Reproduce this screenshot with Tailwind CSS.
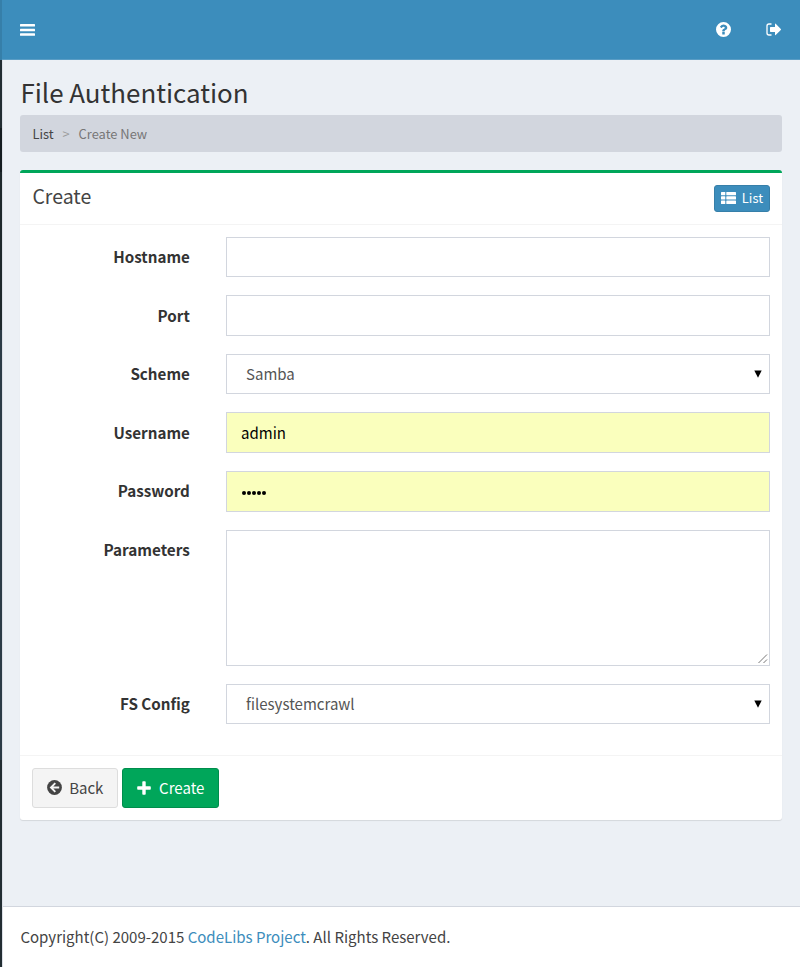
<!DOCTYPE html>
<html lang="en">
<head>
<meta charset="utf-8">
<title>File Authentication</title>
<script src="https://cdn.jsdelivr.net/npm/@tailwindcss/browser@4"></script>
</head>
<body class="font-['Noto_Sans_CJK_SC','Noto_Sans_CJK_JP','Open_Sans',sans-serif] text-[15.02px] leading-[20px] text-[#444] bg-[#ecf0f5]">
<div class="flex h-[967px] w-[800px] overflow-hidden">
  <aside class="flex w-[2px] shrink-0 flex-col">
    <div class="h-[60px] bg-[#367fa9]"></div>
    <div class="h-[68px] bg-[#222d32]"></div>
    <div class="h-[44px] bg-[#141c20]"></div>
    <div class="h-[158px] bg-[#1e282c]"></div>
    <div class="h-[430px] bg-[#2c3b46]"></div>
    <div class="grow bg-[#222d32]"></div>
  </aside>
  <div class="flex min-w-0 grow flex-col border-l border-[#d2d6de]/60">
    <header class="-ml-px flex h-[60px] shrink-0 items-center justify-between border-b border-[#5a9dc5] bg-[#3c8dbc] pr-[19px] pl-[18px] text-white">
      <svg class="mt-px h-[13px] w-[15px]" viewBox="0 0 15 13" fill="currentColor"><rect y="0.1" width="15" height="2.5" rx=".5"/><rect y="4.7" width="15" height="2.5" rx=".5"/><rect y="9.300" width="15" height="2.5" rx=".5"/></svg>
      <div class="flex items-center gap-[35px]">
        <svg class="h-[15px] w-[15px]" viewBox="0 0 1536 1536"><path fill="currentColor" fill-rule="evenodd" d="M768 0a768 768 0 1 0 0 1536A768 768 0 0 0 768 0ZM896 1248v-192q0-14-9-23t-23-9H672q-14 0-23 9t-9 23v192q0 14 9 23t23 9h192q14 0 23-9t9-23Zm256-672q0-88-55.500-163T958 297t-170-41q-243 0-371 213-15 24 8 42l132 100q7 6 19 6 16 0 25-12 53-68 86-92 34-24 86-24 48 0 85.500 26t37.500 59q0 38-20 61t-68 45q-63 28-115.500 86.500T640 892v36q0 14 9 23t23 9h192q14 0 23-9t9-23q0-19 21.500-49.500T972 829q32-18 49-28.500t46-35 44.500-48 28-60.500 12.500-81Z"/></svg>
        <svg class="h-[13px] w-[15px]" viewBox="0 0 15 13" fill="currentColor"><path d="M5.500 1H3A2 2 0 0 0 1 3v7a2 2 0 0 0 2 2h2.500" fill="none" stroke="currentColor" stroke-width="1.300"/><path d="M4.600 4.100H9V1.100q0-.8.7-.3l5.100 5.200q.4.400 0 .9L9.700 12.100q-.7.500-.7-.3V8.900H4.600q-.6 0-.6-.6V4.700q0-.6.6-.6Z"/></svg>
      </div>
    </header>
    <main class="flex h-[846.400px] shrink-0 flex-col pr-[18px] pl-[17.400px]">
      <h1 class="mt-[15px] h-[40px] text-[25.900px] leading-[34px] text-[#333]">File Authentication</h1>
      <nav class="flex h-[37px] shrink-0 items-center rounded-[3px] bg-[#d2d6de] px-3 text-[12.900px]">
        <span class="text-[#444]">List</span><span class="ml-[9px] w-[16px] text-[#999] text-[12.900px]">&gt;</span><span class="text-[#777]">Create New</span>
      </nav>
      <section class="mt-[18px] flex h-[650px] shrink-0 flex-col rounded-[3px] border-t-[3px] border-[#00a65a] bg-white shadow-[0_1px_1px_rgba(0,0,0,0.1)]">
        <div class="flex h-[52px] shrink-0 items-start justify-between border-b border-[#f4f4f4] px-3 pt-[12px]">
          <h2 class="-mt-px text-[19.500px] leading-[23px]">Create</h2>
          <a class="flex h-[27px] w-[56px] items-center justify-between rounded-[3px] border border-[#367fa9] bg-[#3c8dbc] px-[6px] text-[12.900px] text-white">
            <svg class="-mt-[2px] h-[12px] w-[15px]" viewBox="0 0 15 12" fill="currentColor"><rect width="4.300" height="3.300" rx=".5"/><rect x="5.300" width="9.700" height="3.300" rx=".5"/><rect y="4.300" width="4.300" height="3.300" rx=".5"/><rect x="5.300" y="4.300" width="9.700" height="3.300" rx=".5"/><rect y="8.600" width="4.300" height="3.300" rx=".5"/><rect x="5.300" y="8.600" width="9.700" height="3.300" rx=".5"/></svg>
            <span class="-mt-px">List</span>
          </a>
        </div>
        <form class="flex h-[530px] shrink-0 flex-col gap-[18.100px] px-3 pt-[11.700px]">
          <div class="flex h-[40.500px] shrink-0"><label class="w-[157.500px] pt-[9.400px] text-right text-[15.200px] font-bold text-[#333]">Hostname</label><div class="ml-auto w-[544px] border border-[#d2d6de]"></div></div>
          <div class="flex h-[40.500px] shrink-0"><label class="w-[157.500px] pt-[9.400px] text-right text-[15.200px] font-bold text-[#333]">Port</label><div class="ml-auto w-[544px] border border-[#d2d6de]"></div></div>
          <div class="flex h-[40.500px] shrink-0"><label class="w-[157.500px] pt-[9.400px] text-right text-[15.200px] font-bold text-[#333]">Scheme</label><div class="ml-auto flex w-[544px] items-center justify-between border border-[#d2d6de] pr-[7px] pl-[19px] text-[#555]"><span>Samba</span><svg class="h-[8px] w-[8px]" viewBox="0 0 8 8"><path d="M.3.500h7.400L4 7.700Z" fill="#000"/></svg></div></div>
          <div class="flex h-[40.500px] shrink-0"><label class="w-[157.500px] pt-[10px] text-right text-[15.200px] font-bold text-[#333]">Username</label><div class="ml-auto flex w-[544px] items-center border border-[#d2d6de] bg-[#faffbd] pl-[14px] text-black">admin</div></div>
          <div class="flex h-[40.500px] shrink-0"><label class="w-[157.500px] pt-[9.400px] text-right text-[15.200px] font-bold text-[#333]">Password</label><div class="ml-auto flex w-[544px] items-center gap-[1px] border border-[#d2d6de] bg-[#faffbd] pt-[3px] pl-[14.500px]"><i class="size-[4.200px] rounded-full bg-black"></i><i class="size-[4.200px] rounded-full bg-black"></i><i class="size-[4.200px] rounded-full bg-black"></i><i class="size-[4.200px] rounded-full bg-black"></i><i class="size-[4.200px] rounded-full bg-black"></i></div></div>
          <div class="flex h-[136px] shrink-0"><label class="w-[157.500px] pt-[9.400px] text-right text-[15.300px] font-bold text-[#333]">Parameters</label><div class="ml-auto flex w-[544px] items-end justify-end border border-[#d2d6de] p-px"><svg class="h-[10px] w-[10px]" viewBox="0 0 10 10" fill="none" stroke="#777" stroke-width="1"><path d="M.5 9 9 .5M5.500 9 9 5.500"/></svg></div></div>
          <div class="flex h-[40.500px] shrink-0"><label class="w-[157.500px] pt-[9.400px] text-right text-[15.200px] font-bold text-[#333]">FS Config</label><div class="ml-auto flex w-[544px] items-center justify-between border border-[#d2d6de] pr-[7px] pl-[19px] text-[#555]"><span>filesystemcrawl</span><svg class="h-[8px] w-[8px]" viewBox="0 0 8 8"><path d="M.3.500h7.400L4 7.700Z" fill="#000"/></svg></div></div>
        </form>
        <div class="flex grow gap-1 border-t border-[#f4f4f4] px-3 pt-[12px]">
          <a class="flex h-[40px] w-[86px] items-center justify-between rounded-[3px] border border-[#ddd] bg-[#f4f4f4] px-[14px] text-[#444]">
            <svg class="-mt-px h-[15px] w-[15px]" viewBox="0 0 15 15"><circle cx="7.500" cy="7.500" r="7.400" fill="#444"/><path d="M8.300 3.200 4 7.500l4.300 4.300M4.500 7.500h7.700" fill="none" stroke="#f4f4f4" stroke-width="1.900"/></svg>
            <span>Back</span></a>
          <a class="flex h-[40px] w-[97px] items-center justify-between rounded-[3px] border border-[#008d4c] bg-[#00a65a] px-[14px] text-white">
            <svg class="-mt-px h-[14px] w-[14px]" viewBox="0 0 14 14" fill="currentColor"><path d="M5.300 1q0-.8.800-.8h1.800q.8 0 .8.800v4.300H13q.8 0 .8.800v1.800q0 .8-.8.800H8.700V13q0 .8-.8.800H6.100q-.8 0-.8-.8V8.700H1q-.8 0-.8-.8V6.100q0-.8.800-.8h4.300Z"/></svg>
            <span>Create</span></a>
        </div>
      </section>
    </main>
    <footer class="flex grow items-center border-t border-[#d2d6de] bg-white pl-[17.400px] whitespace-pre">Copyright(C) 2009-2015 <a class="text-[#3c8dbc]">CodeLibs Project</a>. All Rights Reserved.</footer>
  </div>
</div>
</body>
</html>
